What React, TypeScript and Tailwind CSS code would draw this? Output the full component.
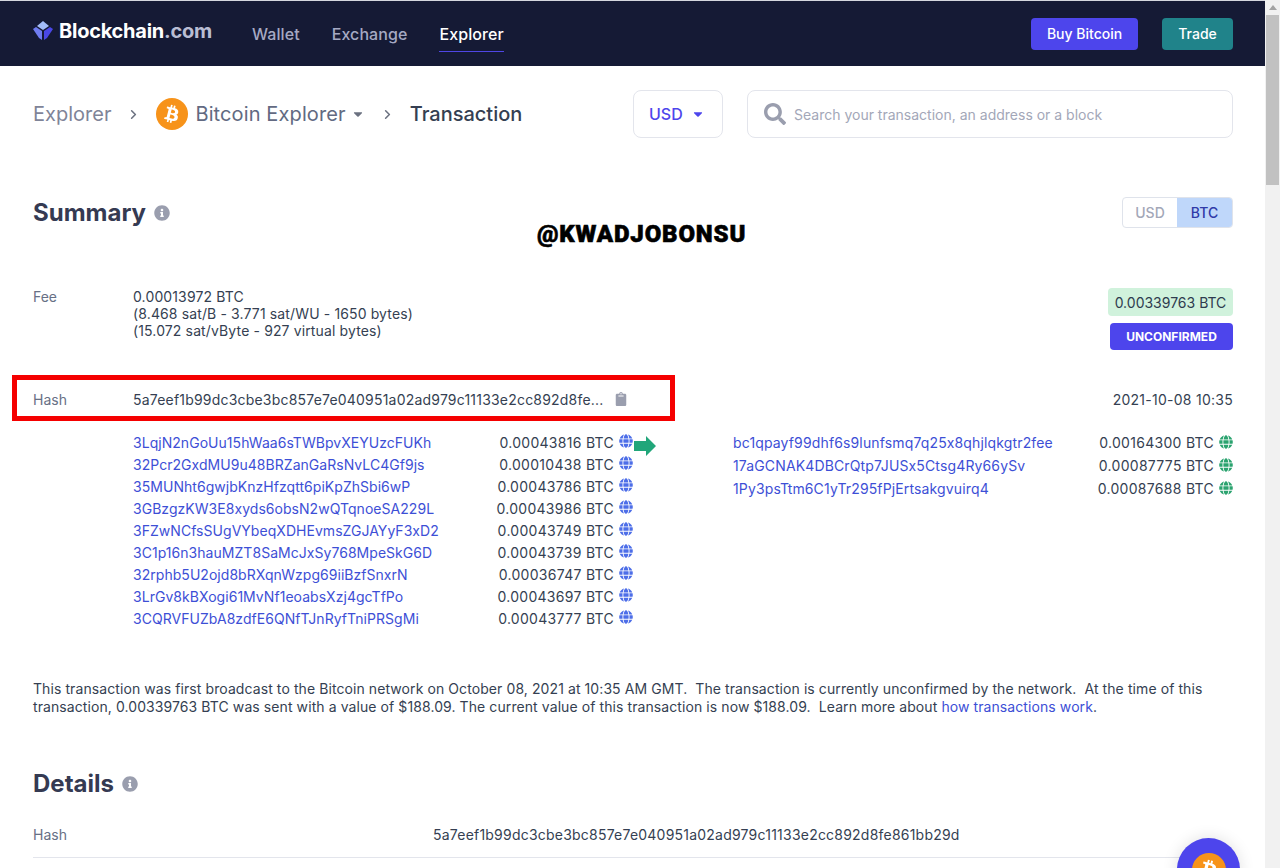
import { ChevronRight } from "lucide-react";
import { FaBtc, FaCaretDown, FaClipboard, FaGlobe, FaInfoCircle, FaSearch } from "react-icons/fa";

const inputs = [
  ["3LqjN2nGoUu15hWaa6sTWBpvXEYUzcFUKh", "0.00043816 BTC"],
  ["32Pcr2GxdMU9u48BRZanGaRsNvLC4Gf9js", "0.00010438 BTC"],
  ["35MUNht6gwjbKnzHfzqtt6piKpZhSbi6wP", "0.00043786 BTC"],
  ["3GBzgzKW3E8xyds6obsN2wQTqnoeSA229L", "0.00043986 BTC"],
  ["3FZwNCfsSUgVYbeqXDHEvmsZGJAYyF3xD2", "0.00043749 BTC"],
  ["3C1p16n3hauMZT8SaMcJxSy768MpeSkG6D", "0.00043739 BTC"],
  ["32rphb5U2ojd8bRXqnWzpg69iiBzfSnxrN", "0.00036747 BTC"],
  ["3LrGv8kBXogi61MvNf1eoabsXzj4gcTfPo", "0.00043697 BTC"],
  ["3CQRVFUZbA8zdfE6QNfTJnRyfTniPRSgMi", "0.00043777 BTC"],
];

const outputs = [
  ["bc1qpayf99dhf6s9lunfsmq7q25x8qhjlqkgtr2fee", "0.00164300 BTC"],
  ["17aGCNAK4DBCrQtp7JUSx5Ctsg4Ry66ySv", "0.00087775 BTC"],
  ["1Py3psTtm6C1yTr295fPjErtsakgvuirq4", "0.00087688 BTC"],
];

function Logo() {
  return (
    <svg width="20" height="20" viewBox="0 0 20 20" className="shrink-0">
      <path d="M10 0 L16 5 L10 9 L4 5 Z" fill="#a3bcf9" />
      <path d="M0 8 L3 6 L9 10 L9 19 L6 17 Z" fill="#6f7cf0" />
      <path d="M20 8 L17 6 L11 10 L11 19 L14 17 Z" fill="#4a47e6" />
    </svg>
  );
}

function Row({ address, amount, wide, globe, track, height }: { address: string; amount: string; wide: number; globe: string; track: string; height: string }) {
  return (
    <div className={`flex items-center ${height}`}>
      <a className={`whitespace-nowrap text-[#3d4fd6] ${track}`} style={{ width: wide }}>
        {address}
      </a>
      <span className="flex-1 whitespace-nowrap text-right tracking-[0.29px] text-[#353f52]">{amount}</span>
      <FaGlobe className={`mb-[2px] ml-[5px] h-[14px] w-[14px] ${globe}`} />
    </div>
  );
}

export default function App() {
  return (
    <div className="relative flex h-[868px] w-[1280px] overflow-hidden bg-white font-['Inter',sans-serif]">
      <div className="w-[1265px] shrink-0">
        <div className="h-px bg-[#d5d7de]" />
        <header className="flex h-[65px] items-center bg-[#151a35] pl-[33px] pr-[32px]">
          <div className="flex items-center gap-[6px] pb-[6px]">
            <Logo />
            <span className="text-[20px] font-bold tracking-[-0.25px] text-white">
              Blockchain<span className="text-[#b9bdd3]">.com</span>
            </span>
          </div>
          <nav className="ml-[40px] flex h-full items-center gap-[32px] text-[16px] font-medium tracking-[0.08px]">
            <span className="text-[#a5a9c3]">Wallet</span>
            <span className="text-[#a5a9c3]">Exchange</span>
            <span className="relative text-white">
              Explorer
              <span className="absolute -bottom-[6px] left-0 right-0 h-px bg-[#4f46e5]" />
            </span>
          </nav>
          <div className="ml-auto flex items-center gap-[24px] text-[14px] font-medium text-white">
            <button className="h-[32px] w-[107px] rounded-[4px] bg-[#4d45ec]">Buy Bitcoin</button>
            <button className="h-[32px] w-[71px] rounded-[4px] bg-[#20838a]">Trade</button>
          </div>
        </header>

        <main className="pl-[33px] pr-[32px]">
          <div className="mt-[24px] flex h-[48px] items-center">
            <span className="text-[20px] font-normal text-[#7f8498]">Explorer</span>
            <ChevronRight size={15} strokeWidth={2.5} className="ml-[15px] text-[#6b7180]" />
            <span className="ml-[15px] flex h-[32px] w-[32px] items-center justify-center rounded-full bg-[#f7931a]">
              <FaBtc className="h-[18px] w-[18px] rotate-[14deg] text-white" />
            </span>
            <span className="ml-[7px] text-[20px] tracking-[0.12px] text-[#626a82]">Bitcoin Explorer</span>
            <FaCaretDown className="ml-[5px] h-[14px] w-[14px] text-[#6b7180]" />
            <ChevronRight size={15} strokeWidth={2.5} className="ml-[15px] text-[#6b7180]" />
            <span className="ml-[15px] text-[20px] font-medium text-[#353f52]">Transaction</span>
            <div className="ml-auto flex items-center gap-[24px]">
              <div className="flex h-[48px] w-[90px] items-center rounded-[8px] border border-[#e3e5ec] pl-[15px] text-[16px] font-medium text-[#4d45ec]">
                USD
                <FaCaretDown className="ml-[8px] h-[14px] w-[14px]" />
              </div>
              <div className="flex h-[48px] w-[486px] items-center rounded-[8px] border border-[#e3e5ec] pl-[16px] text-[14px] text-[#a3a7b8]">
                <FaSearch className="h-[22px] w-[22px] text-[#9a9eae]" />
                <span className="ml-[8px]">Search your transaction, an address or a block</span>
              </div>
            </div>
          </div>

          <div className="mt-[59px] flex h-[31px] items-center">
            <h2 className="text-[24px] font-bold text-[#353a52]">Summary</h2>
            <FaInfoCircle className="ml-[8px] h-[16px] w-[16px] text-[#9a9eae]" />
            <div className="ml-auto flex h-[31px] overflow-hidden rounded-[4px] border border-[#dfe3eb] text-[14px] font-medium">
              <span className="flex w-[54px] items-center justify-center text-[#a3a7b8]">USD</span>
              <span className="flex w-[55px] items-center justify-center bg-[#bfd7fa] text-[#2f3aa8]">BTC</span>
            </div>
          </div>

          <div className="mt-[60px] flex text-[14px] leading-[17px] text-[#353f52]">
            <span className="w-[100px] text-[#677085]">Fee</span>
            <div className="tracking-[0.13px]">
              <div>0.00013972 BTC</div>
              <div>(8.468 sat/B - 3.771 sat/WU - 1650 bytes)</div>
              <div>(15.072 sat/vByte - 927 virtual bytes)</div>
            </div>
            <div className="ml-auto flex flex-col items-end gap-[7px]">
              <span className="flex h-[28px] w-[125px] items-center justify-center rounded-[4px] bg-[#d0f2dc] text-[#2e3b4e]">
                0.00339763 BTC
              </span>
              <span className="flex h-[27px] w-[123px] items-center justify-center rounded-[4px] bg-[#4d45ec] text-[12px] font-bold text-white">
                UNCONFIRMED
              </span>
            </div>
          </div>

          <div className="relative mt-[25px] flex h-[46px] items-center pt-[2px] text-[14px] text-[#353f52]">
            <span className="w-[100px] text-[#677085]">Hash</span>
            <span className="whitespace-nowrap tracking-[0.2px]">5a7eef1b99dc3cbe3bc857e7e040951a02ad979c11133e2cc892d8fe...</span>
            <FaClipboard className="ml-[11px] h-[14px] w-[12px] text-[#9a9eae]" />
            <span className="ml-auto tracking-[0.26px]">2021-10-08 10:35</span>
            <div className="absolute -left-[21px] top-0 h-[46px] w-[663px] border-[5px] border-[#f50000]" />
          </div>

          <div className="mt-[10px] flex text-[14px]">
            <div className="ml-[100px] w-[500px]">
              {inputs.map(([a, b]) => (
                <Row key={a} address={a} amount={b} wide={320} globe="text-[#4d6ee8]" track="tracking-[0.04px]" height="h-[22px]" />
              ))}
            </div>
            <svg width="22" height="20" viewBox="0 0 22 20" className="ml-px mt-[5px] shrink-0">
              <path d="M0 5 H12 V0 L22 10 L12 20 V15 H0 Z" fill="#21a67a" />
            </svg>
            <div className="ml-[77px] w-[500px]">
              {outputs.map(([a, b]) => (
                <Row key={a} address={a} amount={b} wide={340} globe="text-[#2ba36f]" track="tracking-[0.14px]" height="h-[23px]" />
              ))}
            </div>
          </div>

          <p className="mt-[51px] text-[14px] leading-[18px] tracking-[0.085px] text-[#353f52]">
            This transaction was first broadcast to the Bitcoin network on October 08, 2021 at 10:35 AM GMT.&nbsp; The
            transaction is currently unconfirmed by the network.&nbsp; At the time of this transaction, 0.00339763 BTC
            was sent with a value of $188.09. The current value of this transaction is now $188.09.&nbsp; Learn more
            about <a className="text-[#3d4fd6]">how transactions work</a>.
          </p>

          <div className="mt-[52px] flex h-[31px] items-center">
            <h2 className="text-[24px] font-bold text-[#353a52]">Details</h2>
            <FaInfoCircle className="ml-[8px] h-[16px] w-[16px] text-[#9a9eae]" />
          </div>

          <div className="mt-[14px] flex h-[45px] items-center border-b border-[#e3e5ec] pb-[1px] text-[14px] text-[#353f52]">
            <span className="w-[400px] text-[#677085]">Hash</span>
            <span className="whitespace-nowrap tracking-[0.22px]">5a7eef1b99dc3cbe3bc857e7e040951a02ad979c11133e2cc892d8fe861bb29d</span>
          </div>
        </main>
      </div>

      <div className="flex w-[15px] shrink-0 flex-col bg-[#f1f1f1]">
        <div className="flex h-[15px] items-center justify-center">
          <span className="h-0 w-0 border-x-[4px] border-b-[5px] border-x-transparent border-b-[#a3a3a3]" />
        </div>
        <div className="mx-px h-[170px] bg-[#c1c1c1]" />
      </div>

      <div className="absolute left-[1177px] top-[838px] flex h-[63px] w-[63px] items-start justify-center rounded-full bg-[#4d45ec] pt-[15px] shadow-[0_0_16px_rgba(0,0,0,0.12)]">
        <span className="flex h-[34px] w-[34px] items-center justify-center rounded-full bg-[#f7931a]">
          <FaBtc className="h-[20px] w-[20px] rotate-[14deg] text-white" />
        </span>
      </div>

      <div className="absolute left-[537px] top-[220px] font-['Roboto',sans-serif] text-[24px] font-black leading-[28px] tracking-[0.85px] text-black [-webkit-text-stroke:0.6px_black]">
        @KWADJOBONSU
      </div>
    </div>
  );
}
